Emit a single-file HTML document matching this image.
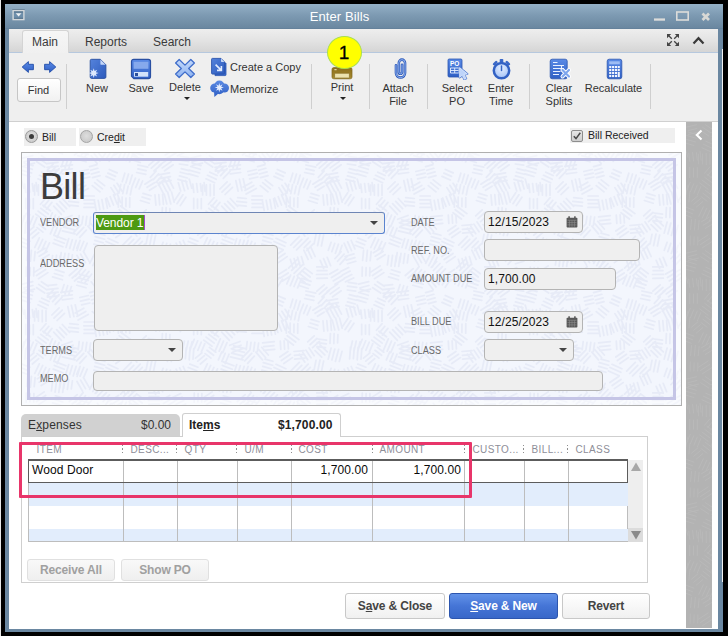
<!DOCTYPE html>
<html>
<head>
<meta charset="utf-8">
<title>Enter Bills</title>
<style>
*{box-sizing:border-box;margin:0;padding:0}
html,body{width:728px;height:636px;overflow:hidden;background:#000}
body{font-family:"Liberation Sans",sans-serif;font-size:12px;color:#333;position:relative}
.abs{position:absolute}
#edgeL{left:0;top:0;width:1px;height:636px;background:#e8e8e8}
#frame{left:5px;top:4px;width:718px;height:628px;background:#6a87a1}
#title{left:5px;top:4px;width:718px;height:25px;background:linear-gradient(#94b0c6,#7d9ab2 45%,#6a87a0 96%,#5f7c96)}
#title .t{position:absolute;left:0;width:100%;top:5px;text-align:center;color:#fff;font-size:13px;line-height:15px;padding-right:49px;letter-spacing:.1px}
#content{left:9px;top:29px;width:709px;height:600px;background:#fff}
#tabstrip{left:9px;top:29px;width:709px;height:23px;background:linear-gradient(#eeeeee,#e3e3e3 50%,#d5d5d5)}
#tabline{left:9px;top:52px;width:709px;height:1px;background:#b6c8de}
#maintab{left:22px;top:30px;width:47px;height:23px;background:linear-gradient(#f6f6f6,#f0f0f0);border:1px solid #d4d4d4;border-bottom:none;border-radius:3px 3px 0 0}
.tabt{position:absolute;top:35px;font-size:12px;line-height:14px;color:#3a3a3a}
#toolbar{left:9px;top:53px;width:709px;height:68px;background:#efefef}
#tbline{left:9px;top:121px;width:709px;height:1px;background:#d0d0d0}
.sep{position:absolute;top:64px;width:1px;height:45px;background:#cfcfcf}
.tl{position:absolute;font-size:11px;line-height:14px;color:#333;text-align:center;white-space:nowrap}
.ico{position:absolute}
.dd{position:absolute;width:0;height:0;border-left:3px solid transparent;border-right:3px solid transparent;border-top:3px solid #222}
#find{left:17px;top:78px;width:44px;height:24px;border:1px solid #c6c6c6;border-radius:3px;background:linear-gradient(#fff,#f1f1f1);text-align:center;line-height:22px;font-size:11px;color:#333;padding-right:1px}
.chip{position:absolute;background:#efefef;height:18px;top:128px}
.lbl{position:absolute;font-size:10px;line-height:10px;color:#6a6a6a;white-space:nowrap;transform:scaleX(.915);transform-origin:0 0}
.inp{position:absolute;background:#efefef;border:1px solid #b4b4b4;border-radius:4px;font-size:12px;line-height:14px;color:#111;white-space:nowrap}
.inp span{position:absolute;left:3px;top:3px;letter-spacing:.1px}
.arr{position:absolute;width:0;height:0;border-left:4px solid transparent;border-right:4px solid transparent;border-top:4px solid #444}
#panel{left:21px;top:152px;width:661px;height:254px;border:1px solid #b0b0b0;background:#eef1fb}
#lav{left:27px;top:158px;width:649px;height:242px;border:3px solid #c5c5e6;background:transparent;box-shadow:0 0 0 5px rgba(255,255,255,.5)}
#sidebar{left:686px;top:122px;width:26px;height:506px;background:#b2b2b2}
.th{position:absolute;top:444px;font-size:10px;line-height:12px;color:#8e8e98;letter-spacing:.38px;white-space:nowrap}
.dot{position:absolute;top:445px;width:1px;height:9px;background:repeating-linear-gradient(#8f8f8f 0,#8f8f8f 1.400px,transparent 1.400px,transparent 3.500px)}
.vl{position:absolute;top:460px;width:1px;height:81px;background:#bdbdbd}
.btn{position:absolute;top:593px;height:26px;border:1px solid #c8c8c8;border-radius:3px;background:linear-gradient(#fff,#f0f0f0);font-weight:bold;font-size:12px;line-height:24px;text-align:center;color:#444;letter-spacing:-.15px}
.btn2{position:absolute;top:559px;height:22px;border:1px solid #e0e0e0;border-radius:3px;background:linear-gradient(#f9f9f9,#efefef);font-weight:bold;font-size:12px;line-height:20px;text-align:center;color:#a0a0a0;letter-spacing:-.15px}
u{text-decoration:underline}
.rl{font-size:10.5px;line-height:13px;color:#222;white-space:nowrap}
.cell{font-size:12px;line-height:14px;color:#0a0a0a;white-space:nowrap;letter-spacing:.1px}
</style>
</head>
<body>
<div class="abs" id="edgeL"></div>
<div class="abs" id="frame"></div>
<div class="abs" id="title"><div class="t">Enter Bills</div></div>
<!-- system menu icon -->
<svg class="abs" style="left:12px;top:8.500px" width="13" height="12" viewBox="0 0 13 12"><rect x="0.300" y="0.200" width="12.400" height="1" fill="#5b768c"/><rect x="1.100" y="1.600" width="10.800" height="9" fill="#6d8eaa" stroke="#d3d7da" stroke-width="1.400"/><rect x="2" y="2.600" width="9" height=".8" fill="#4f6a80"/><rect x="2" y="8.800" width="9" height=".8" fill="#4f6a80"/><path d="M3.700 4.300h5.800L6.600 7.500z" fill="#eef1f3"/></svg>
<!-- window controls -->
<svg class="abs" style="left:650px;top:8px" width="50" height="16" viewBox="0 0 50 16"><rect x="4" y="10.4" width="11" height="2.3" fill="#dcdcda"/><rect x="26.8" y="4" width="11.4" height="8" fill="none" stroke="#dcdcda" stroke-width="1.6"/></svg>
<svg class="abs" style="left:700px;top:11px" width="12" height="11" viewBox="0 0 12 11"><path d="M2.5 2.5L9 9M9 2.5L2.5 9" stroke="#d8d8d5" stroke-width="2.7" fill="none"/></svg>

<div class="abs" style="left:722px;top:49px;width:1px;height:533px;background:#f2f2f2"></div>
<div class="abs" id="content"></div>
<div class="abs" id="tabstrip"></div>
<div class="abs" id="tabline"></div>
<div class="abs" id="maintab"></div>
<div class="tabt" style="left:32px">Main</div>
<div class="tabt" style="left:85px">Reports</div>
<div class="tabt" style="left:153px">Search</div>
<!-- expand + caret icons -->
<svg class="abs" style="left:667px;top:34px" width="12" height="12" viewBox="0 0 12 12"><g fill="#444"><path d="M0 0h4.200L0 4.200z"/><path d="M12 0h-4.200L12 4.200z"/><path d="M0 12h4.200L0 7.800z"/><path d="M12 12h-4.200L12 7.800z"/></g><g stroke="#444" stroke-width="1.300"><path d="M1.500 1.500L4.800 4.800M10.500 1.500L7.200 4.800M1.500 10.500L4.800 7.200M10.500 10.500L7.200 7.200"/></g></svg>
<svg class="abs" style="left:692px;top:36px" width="13" height="9" viewBox="0 0 13 9"><path d="M1.500 7.500L6.500 2.200L11.500 7.500" stroke="#3a3a3a" stroke-width="2.200" fill="none"/></svg>

<div class="abs" id="toolbar"></div>
<div class="abs" id="tbline"></div>

<!-- separators -->
<div class="sep" style="left:66px"></div>
<div class="sep" style="left:311px"></div>
<div class="sep" style="left:369px"></div>
<div class="sep" style="left:427px"></div>
<div class="sep" style="left:529px"></div>
<div class="sep" style="left:650px"></div>
<!-- nav arrows -->
<svg class="ico" style="left:21px;top:60px" width="14" height="14" viewBox="0 0 14 14"><defs><linearGradient id="gb" x1="0" y1="0" x2="0" y2="1"><stop offset="0" stop-color="#5a8ae6"/><stop offset="1" stop-color="#2f5fc4"/></linearGradient></defs><path d="M1.200 7L7.400 1.600V4.300H12.400V9.700H7.400V12.400z" fill="url(#gb)" stroke="#234ea9" stroke-width=".9" stroke-linejoin="round"/></svg>
<svg class="ico" style="left:43px;top:60px" width="14" height="14" viewBox="0 0 14 14"><path d="M12.800 7L6.600 1.600V4.300H1.600V9.700H6.600V12.400z" fill="url(#gb)" stroke="#234ea9" stroke-width=".9" stroke-linejoin="round"/></svg>
<div class="abs" id="find">Find</div>
<!-- New -->
<svg class="ico" style="left:88px;top:58px" width="19" height="22" viewBox="0 0 19 22"><defs><linearGradient id="gn" x1="0" y1="0" x2="1" y2="1"><stop offset="0" stop-color="#5583dc"/><stop offset="1" stop-color="#2c5abc"/></linearGradient></defs><path d="M3.600 1.300H12.400L17.900 6.800V19a1.400 1.400 0 0 1-1.400 1.400H3.600A1.400 1.400 0 0 1 2.200 19V2.700a1.400 1.400 0 0 1 1.400-1.400z" fill="url(#gn)" stroke="#284f9f" stroke-width=".9"/><path d="M12.400 1.600L17.600 6.800H13.300a.9.900 0 0 1-.9-.9z" fill="#c3d6f8"/><path d="M5.70 10.20L6.58 12.98L9.16 11.64L7.82 14.22L10.60 15.10L7.82 15.98L9.16 18.56L6.58 17.22L5.70 20.00L4.82 17.22L2.24 18.56L3.58 15.98L0.80 15.10L3.58 14.22L2.24 11.64L4.82 12.98z" fill="#dde9fd"/></svg>
<div class="tl" style="left:77px;width:40px;top:81px">New</div>
<!-- Save -->
<svg class="ico" style="left:130px;top:58px" width="22" height="22" viewBox="0 0 22 22"><path d="M3.700 1.300H18.300A2.200 2.200 0 0 1 20.500 3.500V18.500A2.200 2.200 0 0 1 18.300 20.700H3.900L1.500 18.300V3.500A2.200 2.200 0 0 1 3.700 1.300z" fill="url(#gb)" stroke="#2a50a2" stroke-width="1.200"/><rect x="3.600" y="3.800" width="14.800" height="7" fill="#86a9ec"/><rect x="4" y="14" width="14.200" height="4.700" fill="#d2e2fa"/><rect x="5" y="15" width="3" height="3" fill="#2b4f9c"/></svg>
<div class="tl" style="left:121px;width:40px;top:81px">Save</div>
<!-- Delete -->
<svg class="ico" style="left:174px;top:58px" width="22" height="21" viewBox="0 0 22 21"><defs><linearGradient id="gx" x1="0" y1="0" x2="0" y2="1"><stop offset="0" stop-color="#c4d9fa"/><stop offset="1" stop-color="#8eb3f1"/></linearGradient></defs><path d="M5.200 1.500L11 7.100L16.800 1.500L20.400 5L14.700 10.500L20.400 16L16.800 19.500L11 13.900L5.200 19.500L1.600 16L7.300 10.500L1.600 5z" fill="url(#gx)" stroke="#3f6dca" stroke-width="1.300" stroke-linejoin="round"/></svg>
<div class="tl" style="left:165px;width:40px;top:80px">Delete</div>
<div class="dd" style="left:184px;top:97px"></div>
<!-- Create a Copy -->
<svg class="ico" style="left:210px;top:57px" width="17" height="20" viewBox="0 0 17 20"><path d="M5 6H16V17.800a.8.800 0 0 1-.8.800H5z" fill="#3868cc" stroke="#2b55b0" stroke-width=".8"/><path d="M2.400 1.400H11L14.600 5V16.300a.8.800 0 0 1-.8.800H2.400a.8.800 0 0 1-.8-.8V2.200a.8.800 0 0 1 .8-.8z" fill="url(#gn)" stroke="#2a52ac" stroke-width=".9"/><path d="M11 1.600L14.400 5H11.800a.8.800 0 0 1-.8-.8z" fill="#c4d8f8"/><path d="M5.600 7.600L10.600 12.600M11.400 9V13.400H7" stroke="#e2ecfe" stroke-width="1.600" fill="none"/></svg>
<div class="tl" style="left:230px;top:60px;text-align:left">Create a Copy</div>
<!-- Memorize -->
<svg class="ico" style="left:209px;top:80px" width="21" height="18" viewBox="0 0 21 18"><defs><linearGradient id="gm" gradientUnits="userSpaceOnUse" x1="0" y1="0" x2="0" y2="17"><stop offset="0" stop-color="#5c8be4"/><stop offset="1" stop-color="#2f5fc4"/></linearGradient></defs><g fill="url(#gm)"><circle cx="5.800" cy="8" r="4.600"/><circle cx="10.400" cy="5.600" r="5"/><circle cx="15.400" cy="8" r="4.600"/><circle cx="10.400" cy="9.400" r="4.800"/><path d="M5 11L5.400 17L10.500 12.500z"/></g><path d="M10.30 3.00L11.07 5.75L13.55 4.35L12.15 6.83L14.90 7.60L12.15 8.37L13.55 10.85L11.07 9.45L10.30 12.20L9.53 9.45L7.05 10.85L8.45 8.37L5.70 7.60L8.45 6.83L7.05 4.35L9.53 5.75z" fill="#e4edfe"/></svg>
<div class="tl" style="left:230px;top:82px;text-align:left">Memorize</div>
<!-- Print -->
<svg class="ico" style="left:331px;top:62px" width="22" height="18" viewBox="0 0 22 18"><defs><linearGradient id="gp" x1="0" y1="0" x2="0" y2="1"><stop offset="0" stop-color="#8c6f1c"/><stop offset="1" stop-color="#a68a2e"/></linearGradient></defs><rect x="1" y="5.600" width="20" height="11.200" rx="1.800" fill="url(#gp)" stroke="#7f651a" stroke-width=".7"/><rect x="3.600" y="11.300" width="14.800" height="4.700" rx=".6" fill="#ece2ad" stroke="#806619" stroke-width=".6"/><rect x="3.400" y="7.200" width="2.200" height="1" fill="#f3ecc8"/></svg>
<div class="tl" style="left:322px;width:40px;top:80px">Print</div>
<div class="dd" style="left:340px;top:97px"></div>
<!-- Attach File -->
<svg class="ico" style="left:394px;top:58px" width="13" height="21" viewBox="0 0 12.400 20.400"><path d="M1.800 7V14.600a4.400 4.400 0 0 0 8.800 0V4.600a3 3 0 0 0-6 0V13.800a1.550 1.550 0 0 0 3.100 0V6.600" fill="none" stroke="#2c59ba" stroke-width="2.500" stroke-linecap="round"/><path d="M1.800 7V14.600a4.400 4.400 0 0 0 8.800 0V4.600a3 3 0 0 0-6 0V13.800a1.550 1.550 0 0 0 3.100 0V6.600" fill="none" stroke="#9dbdf5" stroke-width=".9" stroke-linecap="round"/></svg>
<div class="tl" style="left:378px;width:40px;top:82px;line-height:13px">Attach<br>File</div>
<!-- Select PO -->
<svg class="ico" style="left:447px;top:58px" width="22" height="22" viewBox="0 0 22 22"><rect x="1" y="1" width="14" height="18" rx="1.200" fill="url(#gb)" stroke="#2b55b0" stroke-width=".8"/><text x="3" y="8" font-family="Liberation Sans" font-size="6.500" font-weight="bold" fill="#fff">PO</text><g stroke="#e8f0ff" stroke-width=".9"><path d="M3.500 10H12M3.500 12.500H12M3.500 15H12M3.500 10V15M7.700 10V15M12 10V15"/></g><path d="M12.600 9.600L20.400 16L17 16.400L19.200 20.400L17.300 21.300L15.200 17.300L12.600 19.400z" fill="#c6dafb" stroke="#4a78d2" stroke-width="1.900" stroke-linejoin="round"/><path d="M12.600 9.600L20.400 16L17 16.400L19.200 20.400L17.300 21.300L15.200 17.300L12.600 19.400z" fill="#bdd4fa" stroke="#eef4ff" stroke-width=".7" stroke-linejoin="round"/></svg>
<div class="tl" style="left:437px;width:40px;top:82px;line-height:13px">Select<br>PO</div>
<!-- Enter Time -->
<svg class="ico" style="left:491px;top:58px" width="21" height="22" viewBox="0 0 21 22"><defs><radialGradient id="gf" cx=".5" cy=".35" r=".7"><stop offset="0" stop-color="#e4eeff"/><stop offset="1" stop-color="#9fbff6"/></radialGradient></defs><rect x="8.700" y="1" width="3.600" height="3.500" rx=".8" fill="#3a68c8"/><path d="M3.200 6.200L5.200 4.200M17.800 6.200L15.800 4.200" stroke="#3a68c8" stroke-width="2.600" stroke-linecap="round"/><circle cx="10.500" cy="12.600" r="7.700" fill="url(#gf)" stroke="#3362c4" stroke-width="2.500"/><path d="M10.500 8V12.600" stroke="#3565c6" stroke-width="1.500" stroke-linecap="round"/></svg>
<div class="tl" style="left:481px;width:40px;top:82px;line-height:13px">Enter<br>Time</div>
<!-- Clear Splits -->
<svg class="ico" style="left:549px;top:58px" width="23" height="22" viewBox="0 0 23 22"><rect x="1.200" y="1.200" width="17" height="19.600" rx="2" fill="url(#gb)" stroke="#2b55b0" stroke-width=".8"/><g stroke="#e8f0ff" stroke-width="1.100"><path d="M4 4.500H8.500M4 7.500H15M4 10.500H15M4 13.500H11.500M4 16.500H10M12.500 7.500V12"/></g><path d="M13.500 12L20 18.500M20 12L13.500 18.500" stroke="#fff" stroke-width="4" stroke-linecap="round"/><path d="M13.500 12L20 18.500M20 12L13.500 18.500" stroke="#7ea6ee" stroke-width="2.200" stroke-linecap="round"/></svg>
<div class="tl" style="left:539px;width:40px;top:82px;line-height:13px">Clear<br>Splits</div>
<!-- Recalculate -->
<svg class="ico" style="left:606px;top:58px" width="17" height="22" viewBox="0 0 17 22"><rect x="1.200" y="1.200" width="14.600" height="19.600" rx="2" fill="url(#gb)" stroke="#2b55b0" stroke-width=".8"/><rect x="3.200" y="3.300" width="10.600" height="3" fill="#9dbcf4"/><g fill="#f2f6ff"><rect x="3.200" y="8" width="2.100" height="2.100"/><rect x="6.050" y="8" width="2.100" height="2.100"/><rect x="8.900" y="8" width="2.100" height="2.100"/><rect x="11.700" y="8" width="2.100" height="2.100"/><rect x="3.200" y="11" width="2.100" height="2.100"/><rect x="6.050" y="11" width="2.100" height="2.100"/><rect x="8.900" y="11" width="2.100" height="2.100"/><rect x="11.700" y="11" width="2.100" height="2.100"/><rect x="3.200" y="14" width="2.100" height="2.100"/><rect x="6.050" y="14" width="2.100" height="2.100"/><rect x="8.900" y="14" width="2.100" height="2.100"/><rect x="11.700" y="14" width="2.100" height="5.100"/><rect x="3.200" y="17" width="2.100" height="2.100"/><rect x="6.050" y="17" width="2.100" height="2.100"/><rect x="8.900" y="17" width="2.100" height="2.100"/></g></svg>
<div class="tl" style="left:583.500px;width:60px;top:81px">Recalculate</div>
<!-- yellow callout -->
<div class="abs" style="left:327px;top:36px;width:35px;height:33px;border-radius:50%;background:#ffff00;border:1px solid #a9de4e;text-align:center;font-size:19px;line-height:32px;color:#000;-webkit-text-stroke:.3px #000;padding-right:1px">1</div>



<div class="chip" style="left:24px;width:52px"></div>
<div class="chip" style="left:79px;width:67px"></div>
<div class="abs" style="left:25px;top:130px;width:13px;height:13px;border-radius:50%;border:1px solid #9a9a9a;background:radial-gradient(circle at 50% 45%,#e4e4e4,#c2c2c2)"></div>
<div class="abs" style="left:29px;top:134px;width:5px;height:5px;border-radius:50%;background:#3c3c3c"></div>
<div class="abs" style="left:80px;top:130px;width:13px;height:13px;border-radius:50%;border:1px solid #a4a4a4;background:radial-gradient(circle at 50% 45%,#dedede,#c4c4c4)"></div>
<div class="abs rl" style="left:42px;top:131px">Bill</div>
<div class="abs rl" style="left:97px;top:131px">Cre<u>d</u>it</div>
<div class="chip" style="left:570px;width:105px;height:15px"></div>
<div class="abs" style="left:571px;top:130px;width:12px;height:12px;border-radius:2px;border:1px solid #8e8e8e;background:linear-gradient(#e6e6e6,#cecece)"></div>
<svg class="abs" style="left:572px;top:131px" width="10" height="10" viewBox="0 0 10 10"><path d="M1.800 5.200L4 7.600L8.300 1.800" stroke="#484848" stroke-width="1.500" fill="none"/></svg>
<div class="abs rl" style="left:588px;top:129px">Bill Received</div>

<div class="abs" id="panel"></div>
<svg class="abs" style="left:22px;top:153px" width="659" height="252"><defs><path id="pp" d="M12.5 10.1L2.3 12.5M10.9 6.5L2.1 8.7M10.7 2.7L0.6 5.1M178.7 2.7L168.6 5.1M19.4 2.7L26.3 7.3M16.7 5.4L24.9 10.9M14.7 8.7L22.7 14.0M36.6 16.9L25.5 18.1M36.1 13.1L25.1 14.3M36.0 9.3L24.5 10.6M34.6 5.6L25.0 6.7M49.4 7.5L46.5 16.5M45.7 6.7L43.0 14.9M42.1 5.5L39.4 13.8M57.6 121.2L67.3 123.9M56.6 -1.1L66.3 1.5M56.6 124.9L66.3 127.5M55.7 2.6L65.2 5.2M54.8 6.3L64.0 8.8M75.3 -1.7L81.0 5.6M75.3 124.3L81.0 131.6M72.3 0.7L78.0 7.9M72.3 126.7L78.0 133.9M69.2 2.8L75.1 10.4M92.5 0.2L87.2 8.3M92.5 126.2L87.2 134.3M89.1 -1.5L84.3 5.8M89.1 124.5L84.3 131.8M86.2 -4.0L80.8 4.2M86.2 122.0L80.8 130.2M110.8 1.2L107.6 8.8M107.4 -0.5L104.0 7.5M107.4 125.5L104.0 133.5M104.2 -2.6L100.3 6.6M104.2 123.4L100.3 132.6M100.6 -3.9L96.8 4.9M100.6 122.1L96.8 130.9M111.7 -0.7L121.0 2.4M111.7 125.3L121.0 128.4M110.3 2.9L120.0 6.1M109.7 6.7L118.3 9.5M139.2 11.5L132.0 17.9M136.9 8.5L129.3 15.2M134.2 5.8L126.9 12.2M151.2 11.8L142.6 17.8M149.1 8.6L140.3 14.9M147.8 4.9L137.2 12.4M158.4 3.4L166.7 4.6M157.4 7.1L166.7 8.4M157.3 11.0L165.7 12.1M2.1 10.0L11.0 12.6M0.7 13.5L10.3 16.3M168.7 13.5L178.3 16.3M-0.7 17.1L9.6 20.0M167.3 17.1L177.6 20.0M-1.2 20.9L7.9 23.5M166.8 20.9L175.9 23.5M19.8 19.2L27.1 22.5M17.5 22.3L26.2 26.3M16.0 25.8L24.6 29.7M40.0 18.3L33.3 25.3M37.1 15.7L30.6 22.7M34.2 13.3L28.0 19.9M31.3 10.8L25.4 17.2M50.7 19.5L40.3 20.8M50.3 15.8L39.8 17.0M50.4 11.9L38.8 13.3M67.9 24.0L59.6 25.8M67.2 20.2L58.6 22.2M66.4 16.5L57.8 18.5M78.0 22.6L70.5 24.6M77.1 18.9L69.4 21.0M75.8 15.3L68.7 17.3M74.9 11.6L67.6 13.6M87.3 16.5L95.1 19.9M85.9 20.1L93.5 23.4M84.0 23.4L92.3 27.0M110.2 22.0L107.5 31.1M106.5 21.0L103.9 30.0M102.8 20.2L100.3 28.6M115.8 12.0L125.8 14.1M115.9 15.9L124.1 17.6M114.6 19.5L123.8 21.4M142.8 25.4L136.4 32.3M139.6 23.3L134.0 29.3M136.6 20.9L131.3 26.6M134.1 18.0L128.3 24.3M149.0 27.3L137.8 29.3M148.4 23.6L137.1 25.6M147.5 19.9L136.7 21.8M-8.7 15.6L-0.9 17.6M159.3 15.6L167.1 17.6M158.3 19.2L166.3 21.3M157.4 22.9L165.3 25.0M155.9 26.4L164.9 28.8M14.1 29.5L15.1 38.3M10.4 30.6L11.3 38.1M6.6 30.5L7.6 39.1M2.8 31.1L3.8 39.4M24.0 31.7L24.0 42.2M20.2 31.3L20.3 42.7M16.4 31.9L16.4 42.1M12.6 32.2L12.6 41.9M42.5 34.3L35.1 41.5M40.2 31.2L32.0 39.2M37.1 28.9L29.9 36.0M53.2 25.8L55.6 36.5M49.4 26.4L51.9 37.6M45.8 27.5L48.1 38.1M66.3 35.4L56.1 41.1M63.8 32.5L54.9 37.4M61.8 29.2L53.2 34.1M75.2 26.8L82.6 32.7M72.7 29.7L80.4 35.8M70.3 32.6L78.0 38.8M95.1 30.3L100.1 38.2M91.9 32.3L96.9 40.2M88.9 34.6L93.5 41.9M110.0 33.5L108.3 41.8M106.2 33.1L104.6 40.6M102.6 31.6L100.8 40.6M98.8 31.4L97.1 39.3M120.6 28.0L117.2 35.9M117.1 26.4L113.7 34.5M113.5 25.2L110.3 32.8M134.1 33.2L127.5 37.3M132.5 29.7L125.1 34.3M130.7 26.3L122.9 31.2M146.2 25.0L151.5 35.2M142.5 26.2L148.4 37.5M139.6 28.9L144.6 38.3M135.9 29.9L141.6 40.9M-0.8 26.1L1.8 35.2M167.2 26.1L169.8 35.2M163.6 27.5L166.1 36.0M159.7 27.8L162.6 37.7M156.3 29.8L158.7 37.9M11.3 45.5L11.3 55.6M7.5 46.0L7.5 55.1M3.7 45.4L3.7 55.6M29.9 49.4L24.4 56.2M26.8 47.3L21.6 53.6M24.0 44.7L18.5 51.3M40.3 45.5L47.6 53.4M37.7 48.3L44.6 55.7M34.6 50.6L42.1 58.7M31.7 53.1L39.4 61.3M47.7 44.7L56.3 45.5M46.8 48.4L56.5 49.3M46.3 52.2L56.3 53.1M72.3 54.4L62.0 54.4M72.1 50.6L62.2 50.6M72.6 46.8L61.8 46.8M72.2 43.0L62.1 43.0M83.6 45.8L85.4 55.2M79.9 46.6L81.6 55.8M76.2 47.4L77.9 56.5M72.4 47.8L74.2 57.5M95.2 40.6L98.6 49.5M91.6 41.9L95.2 51.0M88.2 43.7L91.5 52.0M84.7 45.0L87.9 53.4M107.8 44.6L107.7 54.2M104.0 45.1L103.9 53.6M100.2 44.2L100.1 54.5M96.4 44.5L96.3 54.1M121.0 40.4L129.0 42.8M120.0 44.0L127.8 46.4M118.4 47.5L127.2 50.2M140.6 41.3L141.4 51.4M136.8 41.6L137.7 51.8M133.0 41.9L133.9 52.1M149.6 39.1L152.2 49.2M145.7 39.2L148.8 51.0M142.3 41.1L144.8 51.0M163.9 44.2L158.3 52.6M160.9 41.8L155.0 50.7M157.7 39.7L151.8 48.6M14.8 64.6L11.4 72.8M11.2 63.2L7.9 71.3M7.7 61.8L4.4 69.8M4.2 60.4L0.9 68.4M172.2 60.4L168.9 68.4M20.9 52.2L28.5 57.8M18.7 55.3L26.2 60.9M16.1 58.1L24.2 64.1M13.8 61.1L22.0 67.2M37.0 63.6L32.7 73.6M33.5 62.1L29.2 72.2M30.3 59.9L25.4 71.4M52.4 69.8L42.6 73.3M51.0 66.2L41.4 69.8M50.0 62.5L39.7 66.3M68.6 64.0L67.4 72.3M64.8 63.3L63.6 72.1M61.0 63.4L59.9 70.9M57.2 62.7L56.2 70.6M84.7 70.4L73.8 71.4M83.9 66.6L73.7 67.6M84.3 62.7L72.6 63.9M97.9 61.7L98.4 70.0M94.1 61.9L94.6 70.2M90.3 62.1L90.8 70.4M98.6 53.0L108.9 60.6M97.2 56.7L105.7 63.0M95.0 59.7L103.4 66.0M129.5 62.3L122.6 68.6M126.9 59.5L120.1 65.7M124.2 56.8L117.7 62.8M127.9 60.0L136.5 61.1M127.2 63.7L136.3 64.9M127.0 67.6L135.5 68.7M147.9 55.6L147.6 64.0M144.1 54.7L143.8 64.6M140.4 54.5L140.0 64.5M2.0 62.9L-0.4 73.6M170.0 62.9L167.6 73.6M166.2 62.2L163.9 72.6M162.4 62.0L160.4 71.2M16.7 79.7L10.4 85.0M14.4 76.7L7.8 82.2M11.9 73.9L5.5 79.2M19.4 68.4L25.8 73.2M17.0 71.3L23.6 76.3M15.1 74.6L21.0 79.1M39.0 75.2L35.2 84.5M35.2 74.4L31.9 82.4M31.7 73.0L28.4 80.9M43.6 66.8L55.3 69.7M42.6 70.5L54.4 73.4M41.6 74.2L53.6 77.1M40.4 77.8L53.0 80.9M64.3 77.2L57.7 84.3M61.7 74.4L54.7 81.9M58.9 71.9L52.0 79.2M71.7 68.3L78.3 76.0M68.5 70.3L75.7 78.8M65.9 73.1L72.5 80.9M102.4 78.6L93.8 84.5M100.5 75.3L91.4 81.5M97.9 72.5L89.8 78.0M114.9 79.2L104.6 80.1M114.3 75.4L104.5 76.3M114.0 71.6L104.0 72.5M119.0 68.9L124.2 76.7M115.9 71.1L121.0 78.8M112.8 73.4L117.7 80.7M109.4 75.2L114.8 83.1M130.0 65.9L137.3 72.9M127.1 68.4L134.8 75.9M125.0 71.6L131.7 78.1M152.0 72.4L149.3 82.5M148.6 70.4L145.4 82.5M144.8 70.0L141.9 81.0M141.1 69.0L138.2 80.1M3.8 69.6L3.0 80.1M0.1 68.3L-0.8 80.8M168.1 68.3L167.2 80.8M164.2 68.9L163.4 79.6M160.5 68.1L159.6 80.0M-0.2 85.1L7.9 88.2M167.8 85.1L175.9 88.2M-1.7 88.5L6.7 91.8M166.3 88.5L174.7 91.8M-2.9 92.2L5.2 95.3M165.1 92.2L173.2 95.3M27.5 89.8L23.2 99.1M23.9 88.4L19.8 97.2M20.7 86.4L16.2 96.0M17.3 84.8L12.8 94.4M33.4 82.9L43.9 86.8M32.4 86.5L42.3 90.2M31.2 90.1L40.9 93.8M57.5 89.2L55.1 97.4M54.1 87.4L51.2 97.0M50.3 86.7L47.7 95.5M46.7 85.5L44.0 94.5M65.2 90.2L61.7 98.4M61.8 88.5L58.1 97.1M58.1 87.5L54.8 95.1M75.0 80.1L82.9 82.3M73.3 83.6L82.6 86.2M72.7 87.4L81.1 89.7M71.8 91.1L79.9 93.3M86.0 85.3L95.9 89.7M84.0 88.5L94.8 93.3M82.4 92.0L93.2 96.8M114.1 89.3L106.6 96.9M111.7 86.4L103.7 94.5M109.3 83.4L100.7 92.1M123.2 90.8L116.7 97.5M120.3 88.3L114.2 94.6M118.2 85.1L110.9 92.6M133.6 82.2L131.4 93.0M130.0 81.0L127.6 92.6M126.0 81.3L124.1 90.9M152.0 92.4L149.0 101.5M148.4 91.2L145.4 100.3M144.7 90.4L141.9 98.6M141.1 89.3L138.3 97.3M161.2 87.5L164.9 95.9M157.7 88.9L161.5 97.6M154.1 90.2L158.2 99.4M13.1 98.6L12.2 107.7M9.4 97.4L8.4 108.1M5.6 97.3L4.6 107.5M27.1 101.7L19.2 106.5M25.1 98.5L17.2 103.2M23.0 95.3L15.4 99.8M41.9 104.0L40.7 113.4M38.2 102.9L36.8 113.5M34.5 102.3L33.1 113.2M30.6 102.5L29.4 112.0M50.4 101.9L49.3 110.0M46.8 100.5L45.4 110.3M43.0 100.4L41.7 109.4M39.2 99.7L37.9 109.0M61.4 98.5L67.3 108.6M58.6 101.2L63.5 109.7M55.0 102.5L60.5 112.1M79.2 104.4L74.4 113.9M76.1 102.3L70.8 112.6M72.4 101.2L67.7 110.3M97.1 103.6L88.4 109.6M95.0 100.5L86.2 106.5M93.0 97.2L83.9 103.5M111.4 103.6L113.7 111.6M107.6 104.2L110.2 113.0M104.1 105.6L106.4 113.8M100.3 106.3L102.9 115.2M120.6 93.7L125.1 103.5M117.1 95.3L121.7 105.1M113.8 97.2L118.1 106.4M137.2 104.3L140.6 112.6M133.6 105.6L137.2 114.2M130.2 107.3L133.6 115.4M157.4 103.1L150.0 111.4M154.1 101.1L147.6 108.3M151.1 98.7L144.9 105.7M165.8 108.3L157.5 110.7M164.9 104.6L156.3 107.1M164.0 100.9L155.0 103.5M11.9 114.7L11.7 123.0M8.1 114.7L7.9 122.8M4.3 114.0L4.1 123.2M25.9 -6.4L16.5 -0.3M25.9 119.6L16.5 125.7M23.7 116.5L14.5 122.5M22.2 112.9L11.9 119.6M33.4 116.8L42.0 119.4M32.4 120.5L40.8 123.0M30.6 -2.1L40.4 0.8M30.6 123.9L40.4 126.8M60.0 -4.4L52.5 2.0M60.0 121.6L52.5 128.0M57.3 118.9L50.2 125.0M55.2 115.7L47.3 122.5M69.6 -4.8L62.8 3.8M69.6 121.2L62.8 129.8M66.9 -7.5L59.5 1.8M66.9 118.5L59.5 127.8M63.4 116.7L57.0 124.8M61.1 113.6L53.4 123.2M87.4 115.9L81.1 122.5M84.4 113.6L78.6 119.6M82.0 110.5L75.4 117.5M78.7 108.5L73.2 114.3M100.3 -2.9L92.2 2.2M100.3 123.1L92.2 128.2M98.2 120.0L90.2 125.0M96.5 116.5L87.9 121.9M114.8 115.0L107.2 122.6M112.5 111.9L104.1 120.4M109.5 109.6L101.7 117.4M107.2 106.5L98.6 115.2M114.6 114.8L122.2 120.7M111.9 117.5L120.2 124.0M109.6 -5.4L117.9 1.0M109.6 120.6L117.9 127.0M107.8 -2.0L115.1 3.6M107.8 124.0L115.1 129.6M137.3 -0.8L126.9 -0.7M137.3 125.2L126.9 125.3M137.6 121.4L126.5 121.5M136.9 117.6L127.2 117.7M137.2 113.8L126.8 113.9M154.0 -0.1L145.0 5.2M154.0 125.9L145.0 131.2M152.0 -3.3L143.2 1.9M152.0 122.7L143.2 127.9M149.8 119.6L141.5 124.5M147.7 116.4L139.7 121.1M163.7 -1.1L155.5 2.8M163.7 124.9L155.5 128.8M161.8 -4.4L154.2 -0.7M161.8 121.6L154.2 125.3M160.2 118.1L152.4 121.9M158.7 114.6L150.6 118.5" fill="none" stroke-linecap="round"/><pattern id="pt" width="168" height="126" patternUnits="userSpaceOnUse"><rect width="168" height="126" fill="#f3f6fd"/><use href="#pp" stroke="#e7ebf7" stroke-width="1.700"/></pattern><pattern id="pt2" width="168" height="126" patternUnits="userSpaceOnUse"><rect width="168" height="126" fill="#b3b3b3"/><use href="#pp" stroke="#b9b9b9" stroke-width="1"/></pattern></defs><rect width="659" height="252" fill="url(#pt)"/></svg>
<div class="abs" id="lav"></div>

<div class="abs" style="left:40px;top:166px;font-size:36px;line-height:42px;color:#3c3c3c;letter-spacing:-.7px">Bill</div>
<div class="lbl" style="left:40px;top:217.5px">VENDOR</div>
<div class="lbl" style="left:40px;top:258.5px">ADDRESS</div>
<div class="lbl" style="left:40px;top:345.5px">TERMS</div>
<div class="lbl" style="left:40px;top:373.5px">MEMO</div>
<div class="lbl" style="left:411px;top:217.5px">DATE</div>
<div class="lbl" style="left:411px;top:245.5px">REF. NO.</div>
<div class="lbl" style="left:411px;top:273.5px">AMOUNT DUE</div>
<div class="lbl" style="left:411px;top:316.5px">BILL DUE</div>
<div class="lbl" style="left:411px;top:345.5px">CLASS</div>
<div class="inp" style="left:93px;top:211.500px;width:292px;height:22.500px;border-color:#5b84cf;border-top-color:#6f86b4;border-radius:3px"><span style="left:2px;top:2.500px;background:#4d9a12;color:#fff;height:15px;line-height:16px;overflow:hidden;letter-spacing:-.08px;padding-right:1px;border-right:1px solid #a04ad0">Vendor 1</span></div>
<div class="arr" style="left:370px;top:221px"></div>
<div class="inp" style="left:94px;top:245px;width:184px;height:86px"></div>
<div class="inp" style="left:93px;top:339px;width:90px;height:22px"></div>
<div class="arr" style="left:168px;top:348px"></div>
<div class="inp" style="left:93px;top:371px;width:510px;height:20px"></div>
<div class="inp" style="left:484px;top:211px;width:99px;height:22px"><span>12/15/2023</span></div>
<div class="inp" style="left:484px;top:239px;width:156px;height:22px"></div>
<div class="inp" style="left:484px;top:268px;width:132px;height:22px"><span>1,700.00</span></div>
<div class="inp" style="left:484px;top:311px;width:99px;height:22px"><span>12/25/2023</span></div>
<div class="inp" style="left:484px;top:339px;width:90px;height:22px"></div>
<div class="arr" style="left:559px;top:348px"></div>
<svg class="abs cal" style="left:566px;top:216px" width="12" height="12" viewBox="0 0 12 12"><rect x=".6" y="1.700" width="10.800" height="9.800" rx=".8" fill="#585858"/><rect x="2.300" y=".3" width="1.600" height="2.600" fill="#585858"/><rect x="8.100" y=".3" width="1.600" height="2.600" fill="#585858"/><path d="M1.500 4.300H10.500M1.500 6.600H10.500M1.500 8.900H10.500M3.600 4.300V10.800M6 4.300V10.800M8.400 4.300V10.800" stroke="#8e8e8e" stroke-width=".6" fill="none"/></svg>
<svg class="abs cal" style="left:566px;top:316px" width="12" height="12" viewBox="0 0 12 12"><rect x=".6" y="1.700" width="10.800" height="9.800" rx=".8" fill="#585858"/><rect x="2.300" y=".3" width="1.600" height="2.600" fill="#585858"/><rect x="8.100" y=".3" width="1.600" height="2.600" fill="#585858"/><path d="M1.500 4.300H10.500M1.500 6.600H10.500M1.500 8.900H10.500M3.600 4.300V10.800M6 4.300V10.800M8.400 4.300V10.800" stroke="#8e8e8e" stroke-width=".6" fill="none"/></svg>

<div class="abs" id="sidebar"></div>
<svg class="abs" style="left:686px;top:122px" width="26" height="506"><rect width="26" height="506" fill="url(#pt2)"/></svg>

<!-- tabs -->
<div class="abs" style="left:21px;top:414px;width:159px;height:23px;background:#d1d1d1;border-radius:5px 5px 0 0"></div>
<div class="abs" style="left:28px;top:418px;font-size:12px;line-height:14px;color:#333;letter-spacing:.15px">E<u>x</u>penses</div>
<div class="abs" style="left:141px;top:418px;font-size:12px;line-height:14px;color:#333">$0.00</div>
<div class="abs" id="lpanel" style="left:21px;top:436px;width:627px;height:147px;border:1px solid #cfcfcf;background:#fff"></div>
<div class="abs" style="left:182px;top:413px;width:159px;height:24px;background:#fff;border:1px solid #cfcfcf;border-bottom:none;border-radius:3px 3px 0 0"></div>
<div class="abs" style="left:189px;top:418px;font-size:12px;line-height:14px;color:#222;font-weight:bold">Ite<u>m</u>s</div>
<div class="abs" style="left:278px;top:418px;font-size:12px;line-height:14px;color:#222;font-weight:bold;letter-spacing:.12px">$1,700.00</div>
<!-- header -->
<div class="th" style="left:36.5px">ITEM</div>
<div class="th" style="left:130.5px">DESC...</div>
<div class="th" style="left:184.5px">QTY</div>
<div class="th" style="left:244.5px">U/M</div>
<div class="th" style="left:298.5px">COST</div>
<div class="th" style="left:379.5px">AMOUNT</div>
<div class="th" style="left:472.5px">CUSTO...</div>
<div class="th" style="left:531.5px">BILL...</div>
<div class="th" style="left:575.5px">CLASS</div>
<div class="dot" style="left:122px"></div><div class="dot" style="left:176px"></div><div class="dot" style="left:236px"></div><div class="dot" style="left:291px"></div><div class="dot" style="left:372px"></div><div class="dot" style="left:464px"></div><div class="dot" style="left:523px"></div><div class="dot" style="left:567px"></div>
<!-- grid -->
<div class="abs" style="left:28px;top:460px;width:600px;height:82px;background:#fff;border:1px solid #bdbdbd;border-top:none"></div>
<div class="abs" style="left:29px;top:482px;width:599px;height:24px;background:#e2edfc"></div>
<div class="abs" style="left:29px;top:529px;width:599px;height:12px;background:#e2edfc"></div>
<div class="vl" style="left:123px"></div><div class="vl" style="left:177px"></div><div class="vl" style="left:237px"></div><div class="vl" style="left:291px"></div><div class="vl" style="left:372px"></div><div class="vl" style="left:464px"></div><div class="vl" style="left:524px"></div><div class="vl" style="left:568px"></div>
<div class="abs" style="left:28px;top:459px;width:600px;height:24px;border:1px solid #5c5c5c;border-top-width:2px"></div>
<div class="abs cell" style="left:32px;top:463px">Wood Door</div>
<div class="abs cell" style="left:291px;width:77px;text-align:right;top:463px">1,700.00</div>
<div class="abs cell" style="left:372px;width:89px;text-align:right;top:463px">1,700.00</div>
<!-- scrollbar -->
<div class="abs" style="left:628px;top:460px;width:15px;height:82px;background:#eeeeee"></div>
<div class="abs" style="left:628px;top:528px;width:15px;height:14px;background:#dcdcdc"></div>
<svg class="abs" style="left:630px;top:462px" width="12" height="10" viewBox="0 0 12 10"><path d="M6 0.500L11 9H1z" fill="#a8a8a8"/></svg>
<svg class="abs" style="left:630px;top:530px" width="12" height="10" viewBox="0 0 12 10"><path d="M6 9.500L11 1H1z" fill="#8a8a8a"/></svg>
<!-- red highlight -->
<div class="abs" style="left:19px;top:441.500px;width:452.500px;height:56.500px;border:3px solid #e8356a;border-radius:1px"></div>
<!-- buttons -->
<div class="btn2" style="left:27px;width:88px">Receive All</div>
<div class="btn2" style="left:121px;width:88px">Show PO</div>
<div class="btn" style="left:345px;width:100px">S<u>a</u>ve &amp; Close</div>
<div class="btn" style="left:449px;width:109px;background:linear-gradient(#6292e8,#4575d6 50%,#3867c9);border-color:#2c55ae;color:#fff"><u>S</u>ave &amp; New</div>
<div class="btn" style="left:562px;width:88px">Revert</div>
<!-- sidebar chevron -->
<svg class="abs" style="left:694px;top:129px" width="10" height="12" viewBox="0 0 10 12"><path d="M7.500 1.500L2.800 6L7.500 10.500" stroke="#fff" stroke-width="2.100" fill="none"/></svg>

</body>
</html>
